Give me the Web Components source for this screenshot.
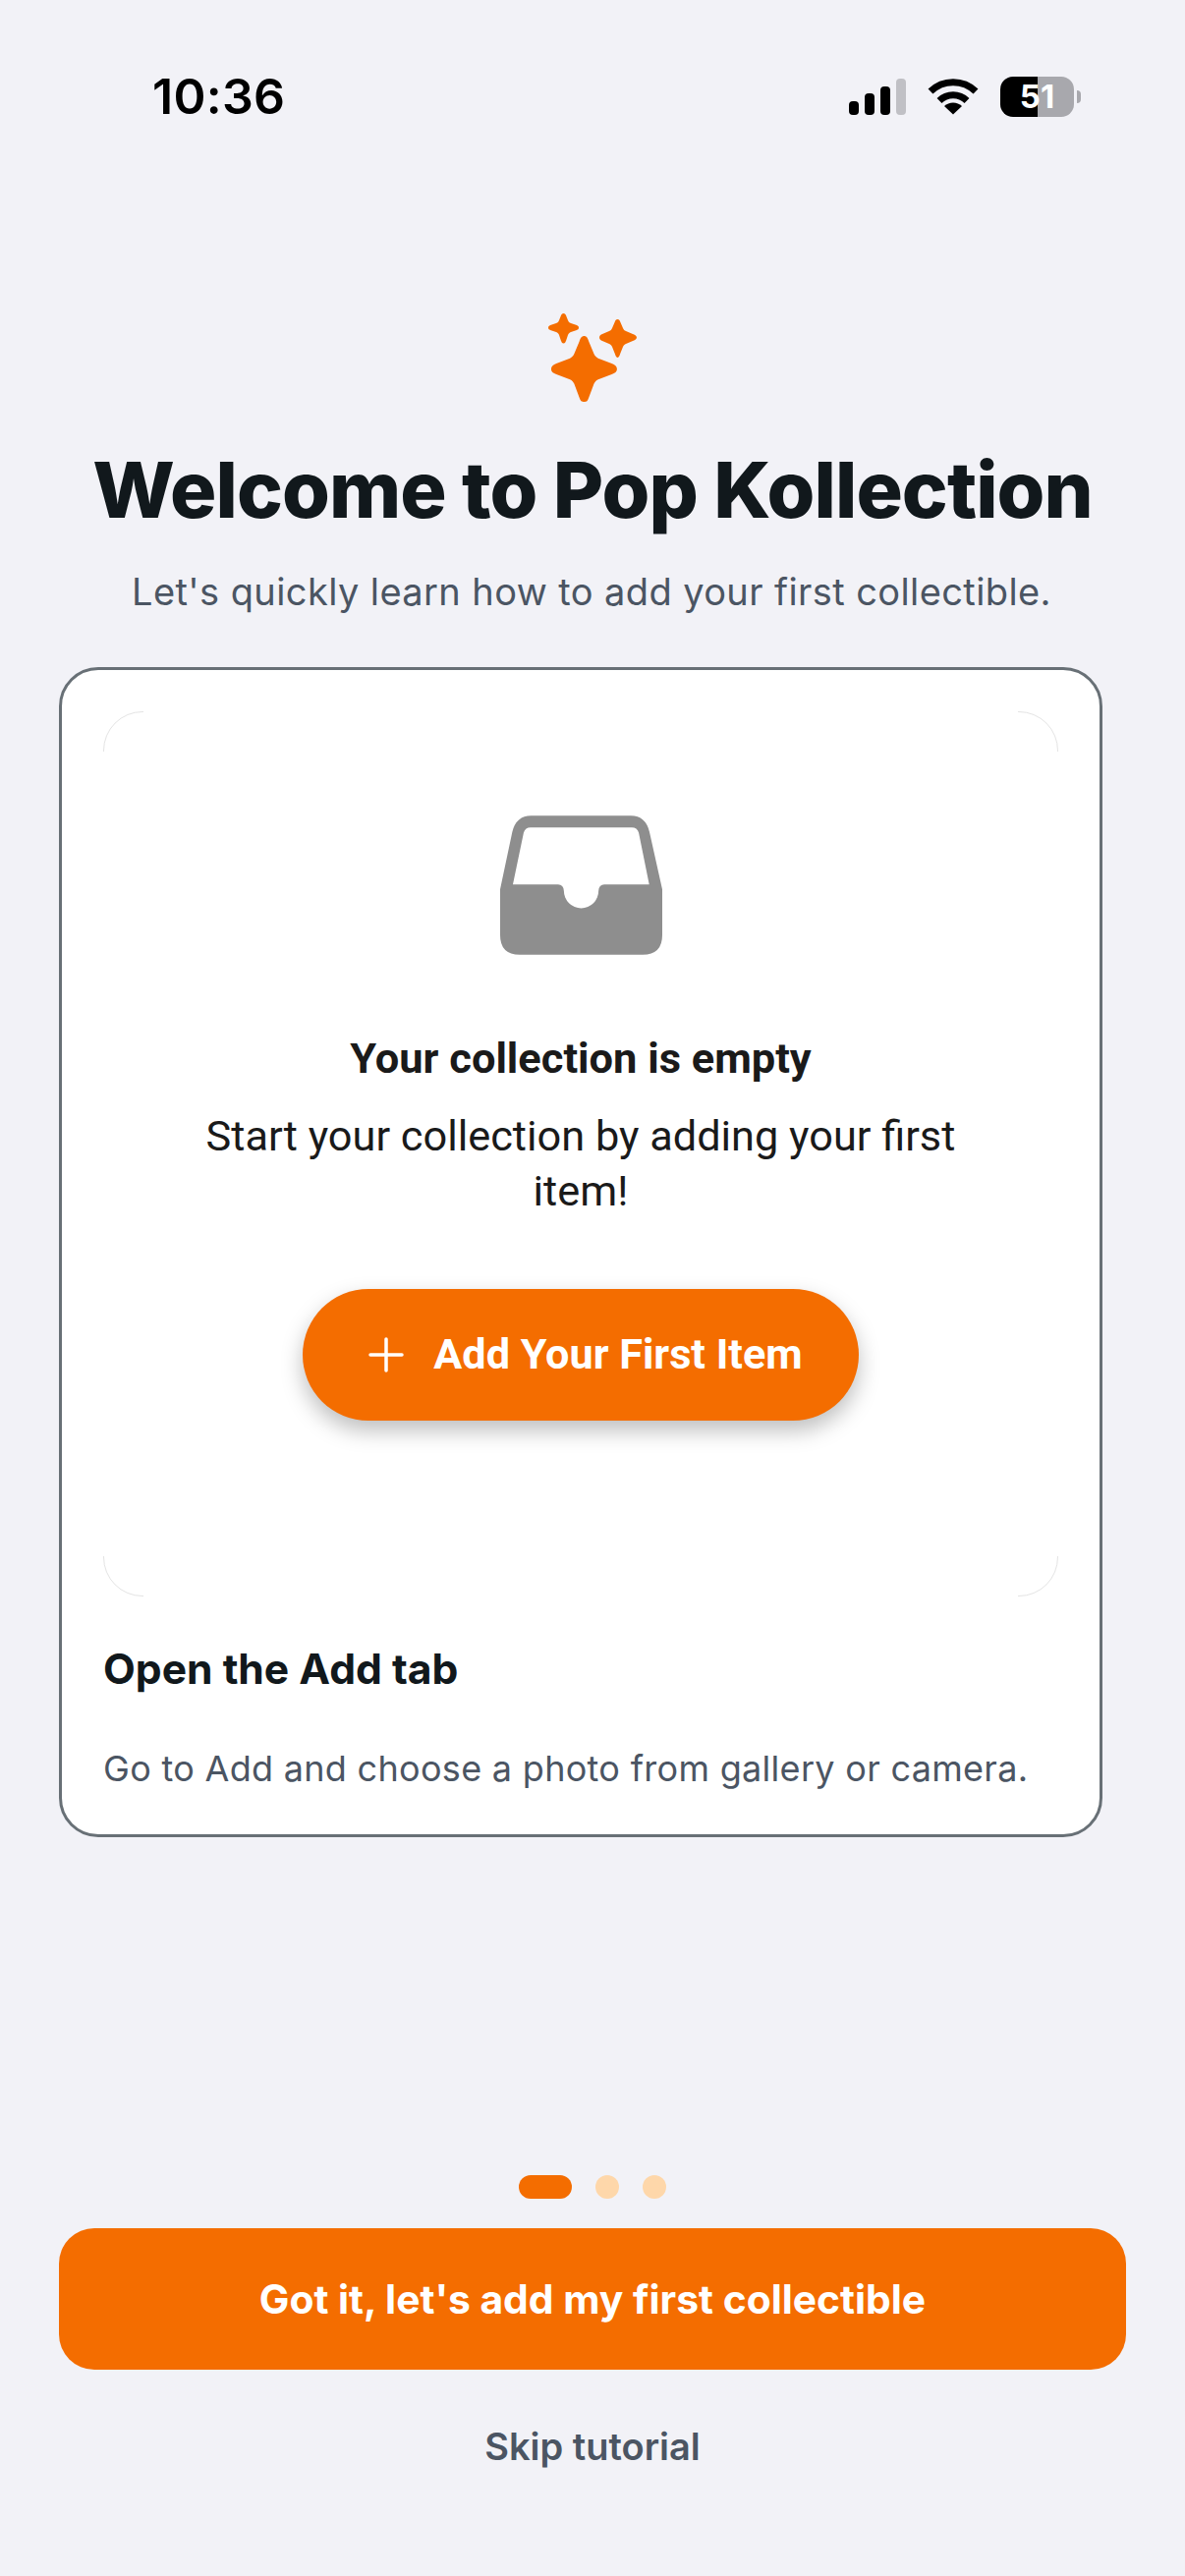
<!DOCTYPE html>
<html lang="en">
<head>
<meta charset="utf-8">
<title>Pop Kollection</title>
<style>
  html, body { margin: 0; padding: 0; background: #f2f2f7; }
  body { font-family: "Inter", "Liberation Sans", sans-serif; }
</style>
</head>
<body>
<tutorial-screen>
  <status-bar slot="status" time="10:36" battery="51"></status-bar>
  <welcome-header slot="header" title="Welcome to Pop Kollection" subtitle="Let's quickly learn how to add your first collectible."></welcome-header>
  <step-card slot="card" heading="Open the Add tab" text="Go to Add and choose a photo from gallery or camera.">
    <empty-state heading="Your collection is empty" text="Start your collection by adding your first item!">
      <add-button>Add Your First Item</add-button>
    </empty-state>
  </step-card>
  <tutorial-footer slot="footer" action="Got it, let's add my first collectible" skip="Skip tutorial"></tutorial-footer>
</tutorial-screen>

<script>
class TutorialScreen extends HTMLElement {
    constructor() {
        super();
        this.attachShadow({mode: "open"});
    }

    connectedCallback() {
        this.shadowRoot.innerHTML = `
        <style>
        :host {
            display: flex;
            flex-direction: column;
            box-sizing: border-box;
            width: 1206px;
            height: 2622px;
            background: #f2f2f7;
            overflow: hidden;
        }
        .body {
            flex: 1;
            display: flex;
            flex-direction: column;
            padding: 0 60px;
        }
        </style>
        <slot name="status"></slot>
        <div class="body">
            <slot name="header"></slot>
            <slot name="card"></slot>
            <slot name="footer"></slot>
        </div>
        `;
    }
}

class StatusBar extends HTMLElement {
    constructor() {
        super();
        this.attachShadow({mode: "open"});
    }

    connectedCallback() {
        const time = this.getAttribute("time");
        const battery = this.getAttribute("battery");
        this.shadowRoot.innerHTML = `
        <style>
        :host {
            display: flex;
            align-items: center;
            justify-content: space-between;
            box-sizing: border-box;
            height: 196px;
            padding: 0 106px 0 155px;
            color: #000;
        }
        .time {
            font: 600 50px/60px "Inter", sans-serif;
            letter-spacing: 0.3px;
        }
        .icons {
            display: flex;
            align-items: center;
        }
        .signal { margin-right: 22px; }
        .wifi { margin-right: 22px; }
        .battery {
            width: 75px;
            height: 41px;
            border-radius: 13px;
            background: linear-gradient(90deg, #000 0, #000 38px, #a8a8ad 38px, #a8a8ad 100%);
            color: #fff;
            font: 700 33px/41px "Inter", sans-serif;
            text-align: center;
        }
        .nub {
            width: 4px;
            height: 13px;
            margin-left: 3px;
            border-radius: 0 4px 4px 0;
            background: #a8a8ad;
        }
        </style>
        <span class="time">${time}</span>
        <div class="icons">
            <svg class="signal" width="58" height="37" viewBox="0 0 58 37">
                <rect x="0" y="23" width="10" height="14" rx="4"/>
                <rect x="16" y="15" width="10" height="22" rx="4"/>
                <rect x="32" y="8" width="10" height="29" rx="4"/>
                <rect x="48" y="0" width="10" height="37" rx="4" fill="#c0c0c5"/>
            </svg>
            <svg class="wifi" width="52" height="38" viewBox="0 0 52 38">
                <path d="M3 14 A33 33 0 0 1 49 14" fill="none" stroke="#000" stroke-width="7"/>
                <path d="M12 23.5 A20 20 0 0 1 40 23.5" fill="none" stroke="#000" stroke-width="7"/>
                <path d="M26 37.5 L17 29 A13 13 0 0 1 35 29 Z"/>
            </svg>
            <div class="battery">${battery}</div>
            <div class="nub"></div>
        </div>
        `;
    }
}

class WelcomeHeader extends HTMLElement {
    constructor() {
        super();
        this.attachShadow({mode: "open"});
    }

    connectedCallback() {
        this.shadowRoot.innerHTML = `
        <style>
        :host {
            display: flex;
            flex-direction: column;
            align-items: center;
            padding-top: 119px;
        }
        svg { display: block; }
        h1 {
            margin: 38px 0 0;
            font: 800 79px/90px "Inter", sans-serif;
            letter-spacing: -0.95px;
            color: #11181c;
            white-space: nowrap;
        }
        p {
            margin: 34px 2px 0 0;
            font: 400 38px/50px "Inter", sans-serif;
            letter-spacing: 0.4px;
            color: #4b5563;
            white-space: nowrap;
        }
        </style>
        <svg width="100" height="100" viewBox="0 0 100 100" fill="#f46d00">
            <path transform="translate(0.5,-5.4) scale(1.063,1.08)" d="M39 30 C36 30 35 32 34 35 L29 47 C28 49 27 50 25 51 L12 56 C9 57 7 59 7 61 C7 64 9 65 12 66 L25 71 C27 72 28 73 29 75 L34 88 C35 91 36 92 39 92 C41 92 42 91 43 88 L48 75 C49 73 50 72 52 71 L65 66 C68 65 70 64 70 61 C70 59 68 57 65 56 L52 51 C50 50 49 49 48 47 L43 35 C42 32 41 30 39 30 Z"/>
            <path d="M20.500 4 C19 4 18.500 5 18 6 L16 11 C15.500 12.500 14.500 13.500 13 14 L7 16 C6 16.500 5 17 5 18.500 C5 20 6 20.500 7 21 L13 23 C14.500 23.500 15.500 24.500 16 26 L18 32 C18.500 33 19 34.500 20.500 34.500 C22 34.500 22.500 33 23 32 L25 26 C25.500 24.500 26.500 23.500 28 23 L34 21 C35 20.500 36 20 36 18.500 C36 17 35 16.500 34 16 L28 14 C26.500 13.500 25.500 12.500 25 11 L23 6 C22.500 5 22 4 20.500 4 Z"/>
            <path d="M75.500 10 C74 10 73.300 11 72.800 12.500 L70 19 C69.400 20.500 68.400 21.500 67 22 L60 25 C58.500 25.600 57 26.500 57 28.500 C57 30.500 58.500 31.400 60 32 L67 35 C68.400 35.500 69.400 36.500 70 38 L72.800 45 C73.300 46.500 74 49 75.500 49 C77 49 77.700 46.500 78.200 45 L81 38 C81.600 36.500 82.600 35.500 84 35 L91 32 C92.500 31.400 95 30.500 95 28.500 C95 26.500 92.500 25.600 91 25 L84 22 C82.600 21.500 81.600 20.500 81 19 L78.200 12.500 C77.700 11 77 10 75.500 10 Z"/>
        </svg>
        <h1>${this.getAttribute("title")}</h1>
        <p>${this.getAttribute("subtitle")}</p>
        `;
    }
}

class StepCard extends HTMLElement {
    constructor() {
        super();
        this.attachShadow({mode: "open"});
    }

    connectedCallback() {
        this.shadowRoot.innerHTML = `
        <style>
        :host {
            display: block;
            box-sizing: border-box;
            width: 1062px;
            margin-top: 52px;
            padding: 42px 42px 42px;
            background: #fff;
            border: 3px solid #687076;
            border-radius: 40px;
        }
        .frame {
            position: relative;
            box-sizing: border-box;
            height: 901px;
            border: 1px solid #e4e4e4;
            border-radius: 40px;
        }
        /* only the corners of the frame stay visible */
        .frame::before, .frame::after {
            content: "";
            position: absolute;
            background: #fff;
        }
        .frame::before { top: -1px; bottom: -1px; left: 40px; right: 40px; }
        .frame::after { top: 40px; bottom: 40px; left: -1px; right: -1px; }
        .content {
            position: relative;
            z-index: 1;
        }
        h3 {
            margin: 49px 0 0;
            font: 700 42.600px/50px "Inter", sans-serif;
            color: #11181c;
        }
        p {
            margin: 51px 0 0;
            font: 400 36px/50px "Inter", sans-serif;
            letter-spacing: 0.3px;
            color: #4b5563;
            white-space: nowrap;
        }
        </style>
        <div class="frame"><div class="content"><slot></slot></div></div>
        <h3>${this.getAttribute("heading")}</h3>
        <p>${this.getAttribute("text")}</p>
        `;
    }
}

class EmptyState extends HTMLElement {
    constructor() {
        super();
        this.attachShadow({mode: "open"});
    }

    connectedCallback() {
        this.shadowRoot.innerHTML = `
        <style>
        :host {
            display: flex;
            flex-direction: column;
            align-items: center;
            padding-top: 105px;
            font-family: "Roboto", sans-serif;
            color: #1a1a1a;
        }
        svg { display: block; }
        h2 {
            margin: 81px 0 0;
            font: 700 43.400px/50px "Roboto", sans-serif;
        }
        p {
            width: 800px;
            margin: 26px 0 71px;
            font: 400 43.300px/56px "Roboto", sans-serif;
            text-align: center;
        }
        </style>
        <svg width="165" height="142" viewBox="85 60 496 425">
            <path fill="#8e8e8e" fill-rule="evenodd" d="M180 60 H485 Q530 60 542 110 L581 285 V425 Q581 485 521 485 H145 Q85 485 85 425 V285 L122 110 Q134 60 180 60 Z M178 96 Q162 96 157 112 L124 270 H262 Q279 270 280 290 A53 53 0 0 0 386 290 Q387 270 404 270 H541 L509 112 Q504 96 488 96 Z"/>
        </svg>
        <h2>${this.getAttribute("heading")}</h2>
        <p>${this.getAttribute("text")}</p>
        <slot></slot>
        `;
    }
}

class AddButton extends HTMLElement {
    constructor() {
        super();
        this.attachShadow({mode: "open"});
    }

    connectedCallback() {
        this.shadowRoot.innerHTML = `
        <style>
        :host {
            display: flex;
            align-items: center;
            justify-content: center;
            gap: 30px;
            box-sizing: border-box;
            width: 566px;
            height: 134px;
            padding-left: 10px;
            background: #f46d00;
            border-radius: 67px;
            box-shadow: 0 10px 22px rgba(0, 0, 0, 0.26);
            color: #fff;
            font: 700 43.200px/50px "Roboto", sans-serif;
            white-space: nowrap;
        }
        svg { display: block; }
        </style>
        <svg width="36" height="36" viewBox="0 0 36 36" fill="none" stroke="#fff" stroke-width="3.500" stroke-linecap="round">
            <path d="M18 2 V34 M2 18 H34"/>
        </svg>
        <slot></slot>
        `;
    }
}

class TutorialFooter extends HTMLElement {
    constructor() {
        super();
        this.attachShadow({mode: "open"});
    }

    connectedCallback() {
        this.shadowRoot.innerHTML = `
        <style>
        :host {
            display: flex;
            flex-direction: column;
            align-items: center;
            margin-top: auto;
            padding-bottom: 107px;
        }
        .dots {
            display: flex;
            gap: 24px;
            margin-bottom: 30px;
        }
        .dots span {
            width: 24px;
            height: 24px;
            border-radius: 12px;
            background: #fed7aa;
        }
        .dots span.on {
            width: 54px;
            background: #f46d00;
        }
        .action {
            display: flex;
            align-items: center;
            justify-content: center;
            width: 1086px;
            height: 144px;
            background: #f46d00;
            border-radius: 36px;
            color: #fff;
            font: 700 40.800px/50px "Inter", sans-serif;
        }
        .skip {
            margin-top: 53px;
            color: #4b5563;
            font: 600 38px/50px "Inter", sans-serif;
        }
        </style>
        <div class="dots"><span class="on"></span><span></span><span></span></div>
        <div class="action">${this.getAttribute("action")}</div>
        <div class="skip">${this.getAttribute("skip")}</div>
        `;
    }
}

customElements.define("tutorial-screen", TutorialScreen);
customElements.define("status-bar", StatusBar);
customElements.define("welcome-header", WelcomeHeader);
customElements.define("step-card", StepCard);
customElements.define("empty-state", EmptyState);
customElements.define("add-button", AddButton);
customElements.define("tutorial-footer", TutorialFooter);
</script>
</body>
</html>
